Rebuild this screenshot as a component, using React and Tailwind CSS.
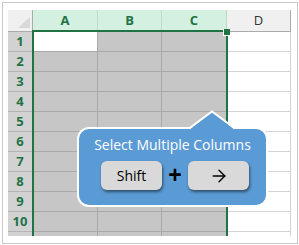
import { ArrowRight } from "lucide-react";

const ROWS = [1, 2, 3, 4, 5, 6, 7, 8, 9, 10, 11];
const COLS = ["A", "B", "C"];

function HeaderRow() {
  return (
    <div className="flex h-[22px]">
      <div className="relative w-[25px] h-full bg-[#f0f0f0] border-r border-b border-[#ababab]">
        <svg className="absolute right-[2px] bottom-[3px]" width="12" height="11" viewBox="0 0 12 11">
          <polygon points="12,0 12,11 0,11" fill="#d9d9d9" />
        </svg>
      </div>
      {COLS.map((c, i) => (
        <div
          key={c}
          className={`${i === 1 ? "w-[64px]" : "w-[65px]"} h-full flex items-center justify-center bg-[#d3f0e0] border-r border-b border-[#b9dcc8] text-[13px] font-bold text-[#217346]`}
        >
          {c}
        </div>
      ))}
      <div className="w-[64px] h-full flex items-center justify-center bg-[#f0f0f0] border-r border-b border-[#ababab] text-[13px] font-normal text-[#333]">
        D
      </div>
    </div>
  );
}

function Row({ n }) {
  return (
    <div className="flex h-[20px]">
      <div className="w-[25px] h-full flex items-center justify-center bg-[#d2d2d2] border-r border-b border-[#b4b4b4] text-[13px] font-bold text-[#217346]">
        {n <= 10 ? n : ""}
      </div>
      {COLS.map((c, i) => (
        <div
          key={c}
          className={`${i === 1 ? "w-[64px]" : "w-[65px]"} h-full border-r border-b border-[#a9a9a9] ${
            n === 1 && i === 0 ? "bg-white" : "bg-[#c6c6c6]"
          }`}
        />
      ))}
      <div className="w-[64px] h-full bg-white border-r border-b border-[#d4d4d4]" />
    </div>
  );
}

export default function App() {
  return (
    <div className="relative w-[299px] h-[245px] bg-white overflow-hidden font-['Open_Sans',sans-serif]">
      <div className="ml-[2px] mt-[2px] w-[296px] h-[242px] border border-[#c8c8c8] pl-[5px] pt-[7px]">
        <div className="h-[226px] overflow-hidden">
          <HeaderRow />
          {ROWS.map((n) => (
            <Row key={n} n={n} />
          ))}
        </div>
      </div>

      {/* selection outline */}
      <div className="absolute left-[32px] top-[30px] w-[196px] h-[206px] border-2 border-b-0 border-[#217346]" />
      <div className="absolute left-[223px] top-[29px] w-[7px] h-[7px] bg-[#217346] border-l border-b border-white" />

      {/* callout */}
      <div className="absolute left-[77px] top-[127px] w-[191px] h-[80px] rounded-[12px] border-2 border-white bg-[#5b9bd5] flex flex-col items-center">
        <div className="mt-[6px] text-[14px] leading-[19px] text-white">Select Multiple Columns</div>
        <div className="mt-[7px] pl-[5px] flex items-center">
          <div className="w-[61px] h-[29px] rounded-[6px] bg-[#d9d9d9] shadow-[1px_2px_3px_rgba(0,0,0,0.5)] flex items-center justify-center text-[14px] text-black">
            Shift
          </div>
          <div className="w-[26px] flex items-center justify-center font-['Liberation_Sans',sans-serif] font-bold text-[23px] leading-none text-black">
            +
          </div>
          <div className="w-[61px] h-[29px] rounded-[6px] bg-[#d9d9d9] shadow-[1px_2px_3px_rgba(0,0,0,0.5)] flex items-center justify-center text-black">
            <ArrowRight size={20} strokeWidth={1.6} />
          </div>
        </div>
      </div>
      <svg className="absolute left-[188px] top-[110px]" width="48" height="22" viewBox="0 0 48 22">
        <polygon points="1,20 24,1.5 47,20" fill="#5b9bd5" />
        <path d="M1,18.5 L24,1.5 L47,18.5" fill="none" stroke="#fff" strokeWidth="2" />
      </svg>
    </div>
  );
}
